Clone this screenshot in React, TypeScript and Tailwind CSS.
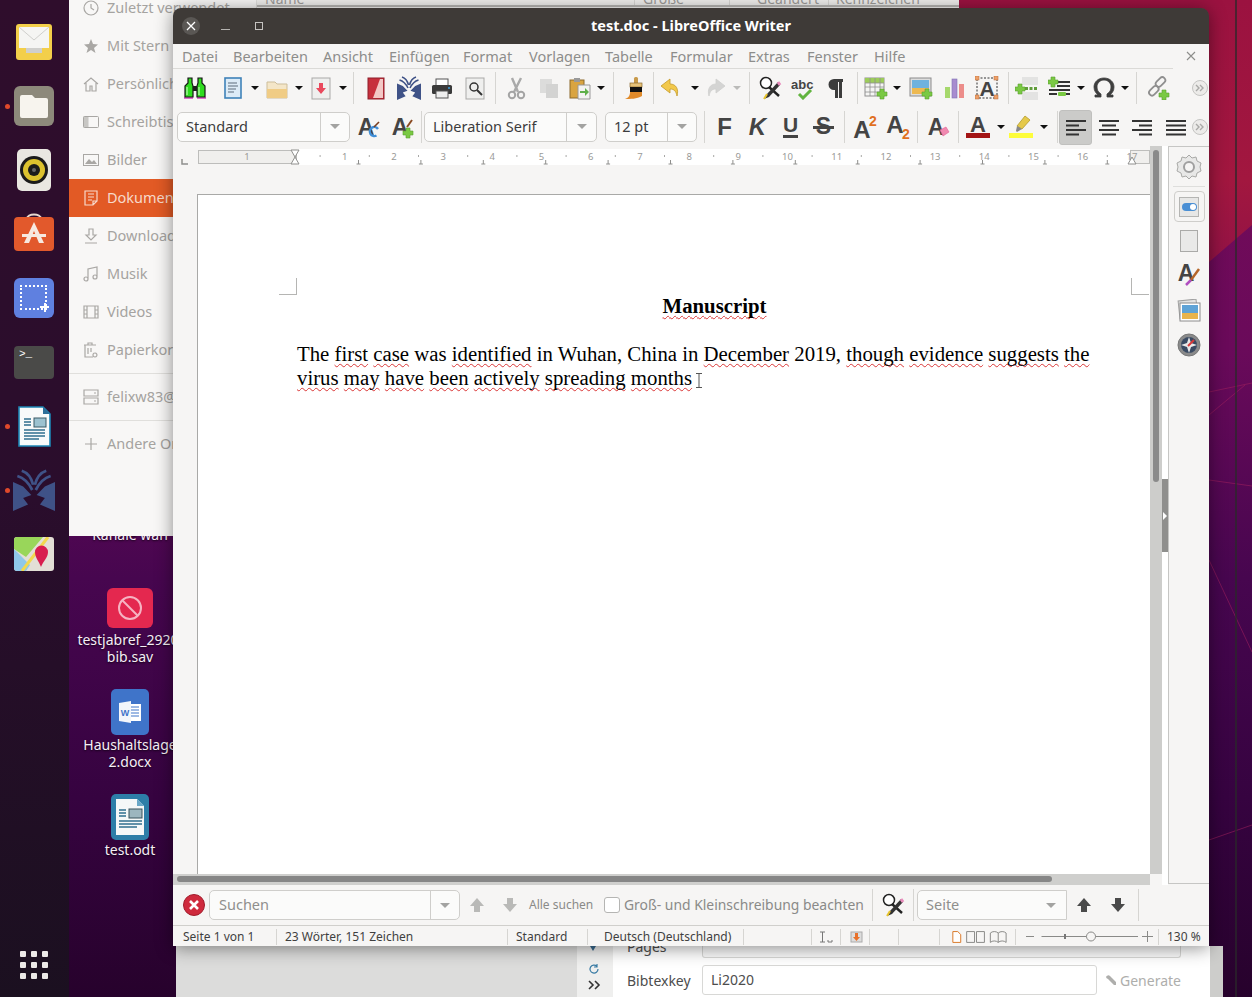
import type { ReactNode } from "react";

const ui = "font-['Noto_Sans',sans-serif]";

const Svg = ({ children, size = 24, vb = "0 0 24 24" }: { children: ReactNode; size?: number; vb?: string }) => (
  <svg width={size} height={size} viewBox={vb} className="block shrink-0">
    {children}
  </svg>
);

const Slot = ({ w, children }: { w: string; children?: ReactNode }) => (
  <div className={`${w} h-full shrink-0 flex items-center justify-center`}>{children}</div>
);

const Caret = ({ w, dim }: { w: string; dim?: boolean }) => (
  <Slot w={w}>
    <span className={`w-0 h-0 border-x-[4px] border-x-transparent border-t-[4px] ${dim ? "border-t-[#bbbbb9]" : "border-t-[#111]"}`} />
  </Slot>
);

const Sep = ({ w }: { w: string }) => (
  <Slot w={w}>
    <span className="w-px h-[32px] bg-[#d6d5d2]" />
  </Slot>
);

const More = () => (
  <svg width="16" height="16" viewBox="0 0 16 16" className="block">
    <circle cx="8" cy="8" r="7.500" fill="#ecebe9" stroke="#c4c4c2" />
    <path d="M4 5l3 3-3 3M8 5l3 3-3 3" fill="none" stroke="#a9a9a7" strokeWidth="1.400" />
  </svg>
);

const Combo = ({ w, inner, text, muted }: { w: string; inner: string; text: string; muted?: boolean }) => (
  <div className={`${w} h-[30px] shrink-0 flex rounded-[5px] border border-[#cfcecb] bg-[#fbfbfa] ${muted ? "text-[#8f8f8d]" : "text-[#3d3d3d]"} text-[14.5px] leading-[26px]`}>
    <span className="flex-1 pl-[8px] whitespace-nowrap overflow-hidden">{text}</span>
    <span className={`${inner} border-l border-[#cfcecb] flex items-center justify-center`}>
      <span className="w-0 h-0 border-x-[5px] border-x-transparent border-t-[5px] border-t-[#a3a3a1]" />
    </span>
  </div>
);

/* ---- toolbar drawings ---- */
const Binoculars = () => (
  <Svg>
    <path d="M1 22h9M14 22h9" stroke="#d63fc0" strokeWidth="1.400" />
    <path d="M5 2h4v5l1 3v11H2V10l3-3zM15 2h4v5l3 3v11h-8V10l1-3z" fill="#2fdc1f" stroke="#151515" strokeWidth="1.200" />
    <path d="M10 10h4v5h-4z" fill="#1d1d1d" />
    <path d="M4 11v8M16 11v8" stroke="#a9f59e" strokeWidth="1.400" />
  </Svg>
);
const NewDoc = () => (
  <Svg>
    <rect x="4" y="2" width="16" height="20" fill="#dcebf7" stroke="#3f82b8" strokeWidth="1.600" />
    <path d="M7 7h9M7 10h10M7 13h8M7 16h6" stroke="#5d6d7c" strokeWidth="1.200" />
  </Svg>
);
const Folder = () => (
  <Svg>
    <path d="M2 6h8l2 2h10v14H2z" fill="#f4e6c8" stroke="#cdbd9a" />
    <path d="M2 13h20v9H2z" fill="#f0cc85" />
  </Svg>
);
const SaveDoc = () => (
  <Svg>
    <rect x="3" y="2" width="18" height="21" fill="#efefee" stroke="#a9a9a7" />
    <path d="M10 7h4v5h3l-5 6-5-6h3z" fill="#e9495d" />
  </Svg>
);
const PdfRed = () => (
  <Svg>
    <rect x="4" y="2" width="16" height="21" fill="#c7303d" stroke="#8e1f2a" />
    <path d="M16 3 L9 22 H19 V3z" fill="#f2c8c6" />
  </Svg>
);
const JabBook = ({ size = 24 }: { size?: number }) => (
  <Svg size={size}>
    <g fill="#3f5287">
      <path d="M0 7.400L5.800 10l4.700 4.800-4.700 1.800 2.800 3.700L0 24z" />
      <path d="M24 7.400L18.200 10l-4.700 4.800 4.700 1.800-2.800 3.700L24 24z" />
    </g>
    <g fill="none" stroke="#3f5287" strokeWidth="1.600">
      <path d="M2.500 4c3.500 1 6.500 4 8.500 8M5 1c3 1 5.500 4 6.500 8" />
      <path d="M21.500 4c-3.500 1-6.500 4-8.500 8M19 1c-3 1-5.500 4-6.500 8" />
    </g>
  </Svg>
);
const Printer = () => (
  <Svg>
    <rect x="6" y="3" width="12" height="7" fill="#fff" stroke="#555" />
    <rect x="2" y="9" width="20" height="9" rx="1.500" fill="#3a3a3a" />
    <rect x="6" y="15" width="12" height="7" fill="#eee" stroke="#555" />
    <circle cx="19" cy="12" r="1" fill="#3aa0e0" />
  </Svg>
);
const Preview = () => (
  <Svg>
    <rect x="3" y="2" width="18" height="21" fill="#efefee" stroke="#a9a9a7" />
    <circle cx="11" cy="11" r="4" fill="none" stroke="#333" strokeWidth="1.500" />
    <path d="M14 14l5 5" stroke="#333" strokeWidth="2" />
  </Svg>
);
const Scissors = () => (
  <Svg>
    <path d="M8 2l6 14M17 2l-7 14" stroke="#aaa" strokeWidth="2.400" />
    <circle cx="8" cy="19" r="3.200" fill="none" stroke="#a4a4a4" strokeWidth="2" />
    <circle cx="17" cy="19" r="3.200" fill="none" stroke="#a4a4a4" strokeWidth="2" />
  </Svg>
);
const CopyDim = () => (
  <Svg>
    <rect x="3" y="3" width="12" height="14" fill="#dcdcdb" />
    <rect x="9" y="8" width="12" height="14" fill="#d3d3d2" />
  </Svg>
);
const Paste = () => (
  <Svg>
    <rect x="2" y="4" width="14" height="18" fill="#d9a441" stroke="#8c6a2c" />
    <rect x="6" y="2" width="6" height="4" fill="#999" />
    <path d="M10 9h12v14H10z" fill="#f3f3f2" stroke="#999" />
    <path d="M12 15h5v-3l4 4-4 4v-3h-5z" fill="#5fb04a" />
  </Svg>
);
const Brush = () => (
  <Svg>
    <rect x="11" y="1" width="4" height="7" rx="1.500" fill="#c89a4a" />
    <rect x="7" y="7" width="12" height="4" fill="#e6c27a" stroke="#8a6a30" strokeWidth=".7" />
    <rect x="7" y="11" width="12" height="5" fill="#111" />
    <path d="M7 16h12v4c-5 3-12 3-17 3 3-1 5-3 5-7z" fill="#e08a2a" />
  </Svg>
);
const Undo = ({ dim }: { dim?: boolean }) => (
  <Svg>
    <path d="M11 3L2 10l9 7v-4c4 0 6 2 7 7 2-7-1-12-7-12z" fill={dim ? "#d4d4d3" : "#f2c84b"} stroke={dim ? "#cfcfce" : "#c49a2a"} strokeWidth=".8" />
  </Svg>
);
const FindPen = () => (
  <Svg>
    <circle cx="8" cy="7" r="5.500" fill="#fff" stroke="#222" strokeWidth="1.500" />
    <path d="M11 11l10 9" stroke="#222" strokeWidth="2.400" />
    <path d="M20 6L9 18l-3 5 5-2L22 9z" fill="#333" />
    <path d="M20 6l2 3" stroke="#e88bbb" strokeWidth="3" />
    <path d="M6 23l3-5" stroke="#e8c52e" strokeWidth="2" />
  </Svg>
);
const Spell = () => (
  <Svg>
    <text x="0" y="13" fontFamily="Liberation Sans" fontWeight="700" fontSize="13" fill="#444">abc</text>
    <path d="M8 18l4 4 8-8" fill="none" stroke="#62b43f" strokeWidth="3" />
  </Svg>
);
const Pilcrow = () => (
  <Svg>
    <path d="M17 3H10a5 5 0 000 11h1v8h3V6h1v16h3V6h1V3z" fill="#3c3c3c" />
  </Svg>
);
const Plus = ({ x, y }: { x: number; y: number }) => (
  <path d={`M${x + 3} ${y}h4v3h3v4h-3v3h-4v-3h-3v-4h3z`} fill="#7ac943" stroke="#5d9e30" strokeWidth=".6" />
);
const TableIcon = () => (
  <Svg>
    <rect x="1" y="2" width="19" height="18" fill="#f5f5f4" stroke="#909090" />
    <rect x="1" y="2" width="19" height="5" fill="#9ccc5a" />
    <path d="M6 2v18M11 2v18M16 2v18M1 7h19M1 11h19M1 16h19" stroke="#909090" strokeWidth=".8" />
    <Plus x={13} y={13} />
  </Svg>
);
const ImageIcon = () => (
  <Svg>
    <rect x="1" y="2" width="21" height="18" fill="#ddd" stroke="#8c8c8c" />
    <rect x="3" y="4" width="17" height="8" fill="#6fb2de" />
    <rect x="3" y="12" width="17" height="6" fill="#edb952" />
    <Plus x={13} y={13} />
  </Svg>
);
const ChartIcon = () => (
  <Svg>
    <rect x="3" y="11" width="5" height="11" fill="#a6d86c" />
    <rect x="10" y="3" width="5" height="19" fill="#a88ccf" stroke="#7f73b5" strokeWidth=".6" />
    <rect x="17" y="8" width="5" height="14" fill="#ec8d8a" />
  </Svg>
);
const TextBox = () => (
  <Svg>
    <rect x="2" y="2" width="20" height="20" fill="none" stroke="#333" strokeDasharray="2 1.500" />
    <text x="12" y="20" textAnchor="middle" fontFamily="Liberation Sans" fontWeight="700" fontSize="21" fill="#444">A</text>
    {[[0, 0], [19, 0], [0, 19], [19, 19]].map(([x, y]) => (
      <rect key={`${x}-${y}`} x={x} y={y} width="4" height="4" fill="#eda06a" stroke="#b76a36" strokeWidth=".5" />
    ))}
  </Svg>
);
const Break = () => (
  <Svg>
    <rect x="7" y="1" width="16" height="8" fill="#e3e3e2" />
    <rect x="7" y="16" width="16" height="8" fill="#e3e3e2" />
    <path d="M10 12.500h13" stroke="#5f9c3a" strokeWidth="3" strokeDasharray="3 1.500" />
    <Plus x={0} y={8} />
  </Svg>
);
const ListAdd = () => (
  <Svg>
    <path d="M9 6h13M9 10h13M1 14h21M1 18h8M16 18h6" stroke="#333" strokeWidth="1.800" />
    <Plus x={0} y={1} />
    <rect x="10" y="16" width="8" height="4" rx="1" fill="#7ac943" />
  </Svg>
);
const Omega = () => (
  <svg width="24" height="24" viewBox="0 0 24 24" className="block">
    <path d="M3 21h6v-3c-3-2-4-4-4-7 0-4 3-7 7-7s7 3 7 7c0 3-1 5-4 7v3h6v-2h-3c2-2 4-4 4-8 0-5-4-9-10-9S2 6 2 11c0 4 2 6 4 8H3z" fill="#3e3e3e" stroke="#3e3e3e" strokeWidth=".8" />
  </svg>
);
const LinkAdd = () => (
  <Svg>
    <rect x="-0.500" y="9" width="11" height="6" rx="3" transform="rotate(-45 5 12) translate(0 4)" fill="none" stroke="#8f8f8f" strokeWidth="1.800" />
    <rect x="9" y="3" width="11" height="6" rx="3" transform="rotate(-45 14.500 6)" fill="none" stroke="#8f8f8f" strokeWidth="1.800" />
    <Plus x={13} y={14} />
  </Svg>
);

const LetterA = ({ children }: { children?: ReactNode }) => (
  <Svg>
    <text x="10" y="20" textAnchor="middle" fontFamily="Liberation Sans" fontWeight="700" fontSize="23" fill="#444">A</text>
    {children}
  </Svg>
);
const Glyph = ({ c, cls }: { c: string; cls: string }) => (
  <span className={`font-['Liberation_Sans',sans-serif] font-bold text-[24px] leading-none text-[#444] ${cls}`}>{c}</span>
);
const Align = ({ d }: { d: string }) => (
  <Svg>
    <path d={d} stroke="#333" strokeWidth="1.800" fill="none" />
  </Svg>
);

const Toolbar1 = () => (
  <div className="h-[38px] flex items-center pl-[5px] pr-[1px]">
    <Slot w="w-[33px]"><Binoculars /></Slot>
    <Slot w="w-[5px]" />
    <Slot w="w-[33px]"><NewDoc /></Slot>
    <Caret w="w-[11px]" />
    <Slot w="w-[33px]"><Folder /></Slot>
    <Caret w="w-[11px]" />
    <Slot w="w-[33px]"><SaveDoc /></Slot>
    <Caret w="w-[11px]" />
    <Sep w="w-[11px]" />
    <Slot w="w-[33px]"><PdfRed /></Slot>
    <Slot w="w-[33px]"><JabBook /></Slot>
    <Slot w="w-[33px]"><Printer /></Slot>
    <Slot w="w-[33px]"><Preview /></Slot>
    <Sep w="w-[8px]" />
    <Slot w="w-[33px]"><Scissors /></Slot>
    <Slot w="w-[33px]"><CopyDim /></Slot>
    <Slot w="w-[29px]"><Paste /></Slot>
    <Caret w="w-[13px]" />
    <Sep w="w-[12px]" />
    <Slot w="w-[31px]"><Brush /></Slot>
    <Sep w="w-[6px]" />
    <Slot w="w-[30px]"><Undo /></Slot>
    <Caret w="w-[17px]" />
    <Slot w="w-[24px]"><span className="-scale-x-100"><Undo dim /></span></Slot>
    <Caret w="w-[20px]" dim />
    <Sep w="w-[4px]" />
    <Slot w="w-[38px]"><FindPen /></Slot>
    <Slot w="w-[28px]"><Spell /></Slot>
    <Slot w="w-[38px]"><Pilcrow /></Slot>
    <Sep w="w-[4px]" />
    <Slot w="w-[34px]"><TableIcon /></Slot>
    <Caret w="w-[8px]" />
    <Slot w="w-[40px]"><ImageIcon /></Slot>
    <Slot w="w-[26px]"><ChartIcon /></Slot>
    <Slot w="w-[40px]"><TextBox /></Slot>
    <Sep w="w-[2px]" />
    <Slot w="w-[36px]"><Break /></Slot>
    <Slot w="w-[30px]"><ListAdd /></Slot>
    <Caret w="w-[12px]" />
    <Slot w="w-[34px]"><Omega /></Slot>
    <Caret w="w-[8px]" />
    <Sep w="w-[14px]" />
    <Slot w="w-[30px]"><LinkAdd /></Slot>
    <div className="ml-auto flex"><More /></div>
  </div>
);

const Toolbar2 = () => (
  <div className="h-[40px] flex items-center pl-[4px] pr-[1px]">
    <Combo w="w-[173px]" inner="w-[29px]" text="Standard" />
    <Slot w="w-[35px]">
      <LetterA>
        <path d="M22 14a4.500 4.500 0 10-1.500 6.500" fill="none" stroke="#3f8ed8" strokeWidth="2.400" />
        <path d="M23 7l-5 5" stroke="#7a3d1d" strokeWidth="1.600" />
      </LetterA>
    </Slot>
    <Slot w="w-[33px]">
      <LetterA>
        <Plus x={13} y={13} />
        <path d="M22 5l-5 7" stroke="#8a4a22" strokeWidth="2" />
      </LetterA>
    </Slot>
    <Sep w="w-[6px]" />
    <Combo w="w-[173px]" inner="w-[30px]" text="Liberation Serif" />
    <Slot w="w-[8px]" />
    <Combo w="w-[92px]" inner="w-[29px]" text="12 pt" />
    <Sep w="w-[15px]" />
    <Slot w="w-[25px]"><Glyph c="F" cls="" /></Slot>
    <Slot w="w-[4px]" />
    <Slot w="w-[33px]"><Glyph c="K" cls="italic" /></Slot>
    <Slot w="w-[33px]">
      <span className="font-['Liberation_Sans',sans-serif] font-bold text-[21px] leading-[20px] text-[#444] border-b-[3px] border-[#444]">U</span>
    </Slot>
    <Slot w="w-[33px]">
      <span className="relative font-['Liberation_Sans',sans-serif] font-bold text-[23px] leading-none text-[#444]">
        S
        <span className="absolute -left-[3px] -right-[3px] top-[11px] h-[3px] bg-[#444]" />
      </span>
    </Slot>
    <Sep w="w-[8px]" />
    <Slot w="w-[33px]">
      <Svg>
        <text x="9" y="23" textAnchor="middle" fontFamily="Liberation Sans" fontWeight="700" fontSize="24" fill="#444">A</text>
        <text x="20" y="11" textAnchor="middle" fontFamily="Liberation Sans" fontWeight="700" fontSize="14" fill="#e0701f">2</text>
      </Svg>
    </Slot>
    <Slot w="w-[33px]">
      <Svg>
        <text x="9" y="18" textAnchor="middle" fontFamily="Liberation Sans" fontWeight="700" fontSize="24" fill="#444">A</text>
        <text x="20" y="24" textAnchor="middle" fontFamily="Liberation Sans" fontWeight="700" fontSize="14" fill="#e0701f">2</text>
      </Svg>
    </Slot>
    <Sep w="w-[7px]" />
    <Slot w="w-[34px]">
      <LetterA>
        <path d="M14 15l6-3 3 5-6 4z" fill="#f08ab0" stroke="#e45e96" strokeWidth=".6" />
      </LetterA>
    </Slot>
    <Sep w="w-[7px]" />
    <Slot w="w-[31px]">
      <Svg>
        <text x="12" y="17" textAnchor="middle" fontFamily="Liberation Sans" fontWeight="700" fontSize="22" fill="#444">A</text>
        <rect x="0" y="18" width="24" height="5" fill="#a31515" />
      </Svg>
    </Slot>
    <Caret w="w-[16px]" />
    <Slot w="w-[24px]">
      <Svg>
        <path d="M16 1l5 4-8 9-5-3z" fill="#e5c94a" stroke="#b29a2a" strokeWidth=".8" />
        <path d="M8 11l5 3-5 3-1-1z" fill="#888" />
        <rect x="0" y="18" width="24" height="5" fill="#fdfd3a" />
      </Svg>
    </Slot>
    <Caret w="w-[22px]" />
    <Sep w="w-[4px]" />
    <div className="w-[33px] h-[35px] mt-[1px] shrink-0 rounded-[3px] bg-[#cbcbc9] border border-[#c0c0be] flex items-center justify-center">
      <Align d="M2 6h20M2 10.500h13M2 15h20M2 19.500h13" />
    </div>
    <Slot w="w-[33px]"><Align d="M2 6h20M5 10.500h14M2 15h20M5 19.500h14" /></Slot>
    <Slot w="w-[34px]"><Align d="M2 6h20M9 10.500h13M2 15h20M9 19.500h13" /></Slot>
    <Slot w="w-[33px]"><Align d="M2 6h20M2 10.500h20M2 15h20M2 19.500h20" /></Slot>
    <div className="ml-auto flex"><More /></div>
  </div>
);

const rulerNums = Array.from({ length: 17 }, (_, i) => i + 1);

const Ruler = () => (
  <div className="h-[19px] pt-[3px] bg-[#f6f5f4]">
    <svg width="977" height="16" viewBox="0 0 977 16" className="block">
      <path d="M9 10v5h6" stroke="#8f8f8d" strokeWidth="1.500" fill="none" />
      <rect x="25.500" y="1.500" width="98" height="13" fill="#f0efed" stroke="#bdbdbb" />
      <rect x="124" y="0" width="833" height="16" fill="#fff" />
      <rect x="957.500" y="1.500" width="19" height="13" fill="#f0efed" stroke="#bdbdbb" />
      <text x="74" y="11" textAnchor="middle" fontFamily="Noto Sans" fontSize="9.500" fill="#9a9a98">1</text>
      <path d="M118 1h8l-4 7 4 7h-8l4-7z" fill="#fff" stroke="#8f8f8d" />
      <path d="M955 15h8l-4-7z" fill="#fff" stroke="#8f8f8d" />
      {rulerNums.map((n) => (
        <g key={n}>
          <text x={123 + n * 49.2 - 0.5} y="11" textAnchor="middle" fontFamily="Noto Sans" fontSize="9.500" fill="#9a9a98">{n}</text>
          <path d={`M${123 + n * 49.2 - 25.1} 6v2`} stroke="#a8a8a6" />
        </g>
      ))}
      {Array.from({ length: 13 }, (_, i) => 185.5 + i * 62.4).map((x) => (
        <path key={x} d={`M${x} 11v4M${x - 2} 15h4`} stroke="#8f8f8d" fill="none" />
      ))}
    </svg>
  </div>
);

const Wavy = ({ children }: { children: ReactNode }) => (
  <span className="underline decoration-wavy decoration-[#d93636] decoration-[1.2px] underline-offset-[2px] [text-decoration-skip-ink:none]">{children}</span>
);

const Page = () => (
  <div className="ml-[24px] mt-[29px] w-[1100px] h-[800px] bg-white border border-[#a9a9a7] relative font-['Liberation_Serif',serif] text-black text-[20.8px] leading-[24px]">
    <span className="absolute left-[81px] top-[83px] w-[18px] h-[17px] border-r border-b border-[#b5b5b3]" />
    <span className="absolute left-[933px] top-[83px] w-[18px] h-[17px] border-l border-b border-[#b5b5b3]" />
    <div className="pl-[99px] pt-[99px] w-[934px]">
      <h1 className="font-bold text-center"><Wavy>Manuscript</Wavy></h1>
      <p className="mt-[24px]">
        The <Wavy>first</Wavy> <Wavy>case</Wavy> was <Wavy>identified</Wavy> in Wuhan, China in <Wavy>December</Wavy> 2019, <Wavy>though</Wavy> <Wavy>evidence</Wavy> <Wavy>suggests</Wavy> <Wavy>the</Wavy>{" "}
        <Wavy>virus</Wavy> <Wavy>may</Wavy> <Wavy>have</Wavy> <Wavy>been</Wavy> <Wavy>actively</Wavy> <Wavy>spreading</Wavy> <Wavy>months</Wavy>
        <svg width="6" height="15" viewBox="0 0 6 15" className="inline-block ml-[4px] align-[-3px]">
          <path d="M0 .5h6M0 14.500h6M3 .5v14" stroke="#555" />
        </svg>
      </p>
    </div>
  </div>
);

const DeckSep = () => <div className="w-[32px] h-px bg-[#dededc]" />;

const Deck = () => (
  <div className="flex-1 border-l border-t border-b border-[#c6c6c4] bg-[#f6f5f4] flex flex-col items-center pt-[7px] mb-[1px]">
    <svg width="26" height="26" viewBox="0 0 26 26" className="block">
      <path d="M13 1l3 3 4-1 1 4 4 2-1 4 1 4-4 2-1 4-4-1-3 3-3-3-4 1-1-4-4-2 1-4-1-4 4-2 1-4 4 1z" fill="#e8e8e7" stroke="#a8a8a6" />
      <circle cx="13" cy="13" r="5" fill="#f6f5f4" stroke="#a0a0a0" strokeWidth="2" />
    </svg>
    <div className="mt-[6px]"><DeckSep /></div>
    <div className="mt-[4px] w-[31px] h-[31px] rounded-[4px] border border-[#cfcecb] flex items-center justify-center">
      <div className="w-[20px] h-[20px] bg-[#e7e7e6] border border-[#b5b5b3] flex items-center justify-center">
        <span className="w-[15px] h-[8px] rounded-full bg-[#4a8fd4] flex justify-end items-center pr-[1px]">
          <span className="w-[6px] h-[6px] rounded-full bg-white" />
        </span>
      </div>
    </div>
    <div className="mt-[8px] w-[18px] h-[22px] bg-[#e9e9e8] border border-[#aaaaa8]" />
    <div className="mt-[11px]">
      <Svg>
        <text x="9" y="18" textAnchor="middle" fontFamily="Liberation Sans" fontWeight="700" fontSize="23" fill="#444">A</text>
        <path d="M22 6l-8 11" stroke="#b5662a" strokeWidth="2.500" />
        <path d="M14 17l-5 5" stroke="#b04ec0" strokeWidth="2.500" />
      </Svg>
    </div>
    <div className="mt-[12px]">
      <Svg>
        <rect x="2" y="1" width="18" height="18" fill="#e3e3e2" stroke="#a0a0a0" transform="rotate(-6 11 10)" />
        <rect x="3" y="4" width="20" height="18" fill="#fff" stroke="#8c8c8c" />
        <rect x="5" y="6" width="16" height="8" fill="#5fa3d6" />
        <rect x="5" y="14" width="16" height="6" fill="#e9b44c" />
      </Svg>
    </div>
    <div className="mt-[10px]">
      <Svg>
        <circle cx="12" cy="12" r="11" fill="#8a8a8a" stroke="#777" />
        <circle cx="12" cy="12" r="8" fill="#3a4a62" />
        <path d="M12 4l2 6 6 2-6 2-2 6-2-6-6-2 6-2z" fill="#e9e9e9" />
        <path d="M17 7l-4 4-2 2z" stroke="#d83a3a" strokeWidth="2" />
      </Svg>
    </div>
  </div>
);

const Arrow = ({ up, dark }: { up?: boolean; dark?: boolean }) => (
  <svg width="18" height="18" viewBox="0 0 18 18" className="block">
    <path d={up ? "M9 2l7 8h-4v6H6v-6H2z" : "M9 16l7-8h-4V2H6v6H2z"} fill={dark ? "#4a4a4a" : "#b9b9b7"} />
  </svg>
);

const FindBar = () => (
  <div className="h-[40px] bg-[#f6f5f4] flex items-center pl-[10px] text-[#8a8a88]">
    <svg width="22" height="22" viewBox="0 0 22 22" className="block shrink-0">
      <circle cx="11" cy="11" r="10.500" fill="#cf2a3d" stroke="#a11d2c" />
      <path d="M7 7l8 8M15 7l-8 8" stroke="#fff" strokeWidth="2.600" />
    </svg>
    <div className="ml-[4px]"><Combo w="w-[251px] [&>span:first-child]:pl-[9px]" inner="w-[29px]" text="Suchen" muted /></div>
    <div className="w-[34px] flex justify-center"><Arrow up /></div>
    <div className="w-[32px] flex justify-center"><Arrow /></div>
    <span className="ml-[3px] w-[75px] text-[12px] whitespace-nowrap">Alle suchen</span>
    <span className="w-[16px] h-[16px] rounded-[3px] border border-[#b5b5b3] bg-white shrink-0" />
    <span className="ml-[4px] w-[248px] text-[13.9px] whitespace-nowrap">Groß- und Kleinschreibung beachten</span>
    <span className="w-px h-[32px] bg-[#d6d5d2]" />
    <div className="w-[40px] flex justify-center"><FindPen /></div>
    <span className="w-px h-[32px] bg-[#d6d5d2]" />
    <div className="ml-[3px]"><Combo w="w-[150px] !rounded-r-none" inner="w-[30px] !border-l-0" text="Seite" muted /></div>
    <div className="w-[34px] flex justify-center"><Arrow up dark /></div>
    <div className="w-[33px] flex justify-center"><Arrow dark /></div>
    <span className="ml-[4px] w-px h-[32px] bg-[#d6d5d2]" />
  </div>
);

const StatusCell = ({ w, children }: { w: string; children?: ReactNode }) => (
  <div className={`${w} shrink-0 h-[16px] flex items-center border-r border-[#d6d5d2] whitespace-nowrap overflow-hidden`}>{children}</div>
);

const StatusBar = () => (
  <div className="h-[21px] border-t border-[#d0cfcc] bg-[#f6f5f4] flex items-center text-[12px] text-[#3f3f3f] pl-[10px] pt-[1px]">
    <StatusCell w="w-[94px]">Seite 1 von 1</StatusCell>
    <StatusCell w="w-[231px]"><span className="pl-[8px]">23 Wörter, 151 Zeichen</span></StatusCell>
    <StatusCell w="w-[80px]"><span className="pl-[8px]">Standard</span></StatusCell>
    <StatusCell w="w-[156px]"><span className="pl-[16px]">Deutsch (Deutschland)</span></StatusCell>
    <StatusCell w="w-[68px]" />
    <StatusCell w="w-[29px]">
      <svg width="28" height="12" viewBox="0 0 28 12" className="block">
        <path d="M8 1h5M8 11h5M10.500 1v10M16 9v2h4v-2" stroke="#777" fill="none" />
      </svg>
    </StatusCell>
    <StatusCell w="w-[29px]">
      <svg width="28" height="12" viewBox="0 0 28 12" className="block">
        <rect x="10" y="1" width="11" height="10" fill="#ddd" stroke="#aaa" />
        <path d="M14 2h3v4h2l-3.500 4L12 6h2z" fill="#e8702a" />
      </svg>
    </StatusCell>
    <StatusCell w="w-[29px]" />
    <StatusCell w="w-[41px]" />
    <StatusCell w="w-[76px]">
      <svg width="76" height="13" viewBox="0 0 76 13" className="block">
        <path d="M13 1.500h5l3 3v8h-8z" fill="#fff" stroke="#d97a2a" />
        <path d="M27 1.500h8v11h-8zM37 1.500h8v11h-8zM51 3c2-2 6-2 8 0 2-2 6-2 8 0v9.500c-2-2-6-2-8 0-2-2-6-2-8 0zM59 3v9.500" fill="none" stroke="#8a8a88" />
      </svg>
    </StatusCell>
    <StatusCell w="w-[143px]">
      <svg width="142" height="13" viewBox="0 0 142 13" className="block">
        <path d="M10 6.500h8M25.500 6.500h96.500M126 6.500h11M131.500 1v11" stroke="#8a8a88" fill="none" />
        <path d="M49 4v5" stroke="#777" strokeWidth="2" />
        <circle cx="75" cy="6.500" r="4.500" fill="#f6f5f4" stroke="#8a8a88" />
      </svg>
    </StatusCell>
    <span className="pl-[8px]">130 %</span>
  </div>
);

const Writer = () => (
  <div className={`absolute left-[173px] top-[8px] w-[1036px] h-[938px] flex flex-col rounded-t-[8px] overflow-hidden shadow-[0_2px_18px_rgba(0,0,0,0.45)] ${ui}`}>
    <div className="h-[36px] shrink-0 bg-[#3e3a37] relative flex items-center justify-center text-white font-bold text-[14.5px]">
      test.doc - LibreOffice Writer
      <div className="absolute left-0 top-0 h-full flex items-center pl-[9px]">
        <span className="w-[18px] h-[18px] rounded-full bg-[#5a5754] flex items-center justify-center">
          <svg width="10" height="10" viewBox="0 0 10 10"><path d="M1 1l8 8M9 1l-8 8" stroke="#fff" strokeWidth="1.300" /></svg>
        </span>
        <span className="ml-[21px] w-[9px] h-px mt-[7px] bg-[#b5b3b0]" />
        <span className="ml-[25px] w-[8px] h-[8px] border border-[#c5c3c0]" />
      </div>
    </div>
    <div className="flex-1 flex flex-col bg-[#f6f5f4] min-h-0">
      <div className="relative h-[24px] shrink-0 mr-[36px] border-b border-[#dbdad7] box-content flex items-center pl-[9px] -mb-[0px] text-[14.5px] text-[#8d8d8b]">
        <span className="w-[51px] pt-[1px]">Datei</span>
        <span className="w-[90px] pt-[1px]">Bearbeiten</span>
        <span className="w-[66px] pt-[1px]">Ansicht</span>
        <span className="w-[74px] pt-[1px]">Einfügen</span>
        <span className="w-[66px] pt-[1px]">Format</span>
        <span className="w-[76px] pt-[1px]">Vorlagen</span>
        <span className="w-[65px] pt-[1px]">Tabelle</span>
        <span className="w-[78px] pt-[1px]">Formular</span>
        <span className="w-[59px] pt-[1px]">Extras</span>
        <span className="w-[67px] pt-[1px]">Fenster</span>
        <span className="pt-[1px]">Hilfe</span>
        <svg width="10" height="10" viewBox="0 0 10 10" className="absolute -right-[23px] top-[7px]"><path d="M1 1l8 8M9 1l-8 8" stroke="#8d8d8b" strokeWidth="1.100" /></svg>
      </div>
      <Toolbar1 />
      <Toolbar2 />
      <div className="h-[739px] flex shrink-0">
        <div className="w-[977px] flex flex-col shrink-0">
          <Ruler />
          <div className="flex-1 min-h-0 overflow-hidden">
            <Page />
          </div>
          <div className="h-[11px] shrink-0 bg-[#cfcfcd] pl-[4px] pt-[2px]">
            <div className="w-[875px] h-[6px] rounded-full bg-[#868686]" />
          </div>
        </div>
        <div className="w-[12px] h-[728px] shrink-0 bg-[#cdcdcb] pt-[4px] pl-[3px]">
          <div className="w-[6px] h-[332px] rounded-full bg-[#8a8a8a]" />
        </div>
        <div className="w-[6px] shrink-0 bg-white pt-[333px]">
          <div className="h-[73px] bg-[#8f8f8d] flex items-center justify-center">
            <span className="w-0 h-0 border-y-[4px] border-y-transparent border-l-[4px] border-l-white" />
          </div>
        </div>
        <Deck />
      </div>
      <FindBar />
      <StatusBar />
    </div>
  </div>
);

/* ---- desktop and what is behind ---- */
const dim = "#a9a7a4";
const Side = ({ label, children, active }: { label: string; children: ReactNode; active?: boolean }) => (
  <div className={`h-[38px] flex items-center pl-[14px] whitespace-nowrap ${active ? "bg-[#e25a25] text-[#f7d9cb]" : "text-[#a5a3a0]"}`}>
    <span className="w-[24px] shrink-0">{children}</span>
    {label}
  </div>
);
const Ic = ({ d, c = dim }: { d: string; c?: string }) => (
  <svg width="16" height="16" viewBox="0 0 16 16" className="block">
    <path d={d} fill="none" stroke={c} strokeWidth="1.200" />
  </svg>
);

const FileManager = () => (
  <div className={`absolute left-[69px] top-[-11px] w-[890px] h-[547px] bg-[#f8f7f6] flex ${ui} text-[14.5px]`}>
    <div className="w-[188px] shrink-0 border-r border-[#e0dfdc]">
      <Side label="Zuletzt verwendet"><Ic d="M8 1a7 7 0 110 14A7 7 0 018 1zM8 4v4l3 2" /></Side>
      <Side label="Mit Stern">
        <svg width="16" height="16" viewBox="0 0 16 16" className="block"><path d="M8 1l2 5 5 .5-4 3.500 1.500 5L8 12l-4.500 3L5 10 1 6.500 6 6z" fill={dim} /></svg>
      </Side>
      <Side label="Persönlicher Ordner"><Ic d="M1 8l7-6 7 6M3 7v8h4v-5h2v5h4V7" /></Side>
      <Side label="Schreibtisch">
        <svg width="16" height="16" viewBox="0 0 16 16" className="block"><rect x=".5" y="2.500" width="15" height="11" rx="1" fill="none" stroke={dim} /><rect x=".5" y="2.500" width="5" height="11" fill={dim} opacity=".6" /></svg>
      </Side>
      <Side label="Bilder">
        <svg width="16" height="16" viewBox="0 0 16 16" className="block"><rect x=".5" y="2.500" width="15" height="11" fill="none" stroke={dim} /><path d="M2 12l4-5 3 3 2-2 3 4z" fill={dim} /></svg>
      </Side>
      <Side label="Dokumente" active>
        <Ic c="#f7d9cb" d="M2 1h12v10l-4 4H2zM5 4h6M5 7h6M5 10h4M10 15v-4h4" />
      </Side>
      <Side label="Downloads"><Ic d="M6 1h4v6h3l-5 5-5-5h3zM2 15h12" /></Side>
      <Side label="Musik"><Ic d="M5 13V3l9-2v10M5 13a2 2 0 11-4 0 2 2 0 014 0zM14 11a2 2 0 11-4 0 2 2 0 014 0z" /></Side>
      <Side label="Videos"><Ic d="M1 2h14v12H1zM4 2v12M12 2v12M1 6h3M1 10h3M12 6h3M12 10h3" /></Side>
      <Side label="Papierkorb"><Ic d="M1 3h12M5 3V1h4v2M2 3v12h8M5 6v6M8 6v4M12 11a2 2 0 11-.1 0" /></Side>
      <div className="h-[9px] flex flex-col justify-center"><div className="h-px bg-[#e0dfdc]" /></div>
      <Side label="felixw83@"><Ic d="M1 1h14v6H1zM1 9h14v6H1zM11 4h2M11 12h2" /></Side>
      <div className="h-[9px] flex flex-col justify-center"><div className="h-px bg-[#e0dfdc]" /></div>
      <Side label="Andere Orte"><Ic d="M8 2v12M2 8h12" /></Side>
    </div>
    <div className="flex-1">
      <div className="h-[18px] bg-[#efeeec] border-b-2 border-[#b9b8b5] flex text-[14px] leading-[20px] text-[#9c9a98] overflow-hidden">
        <span className="w-[378px] pl-[8px] border-r border-[#d6d5d2]">Name</span>
        <span className="w-[95px] pl-[8px] border-r border-[#d6d5d2]">Größe</span>
        <span className="w-[99px] pl-[27px] border-r border-[#d6d5d2]">Geändert</span>
        <span className="pl-[7px]">Kennzeichen</span>
      </div>
    </div>
  </div>
);

const Tile = ({ children }: { children: ReactNode }) => <div className="h-[64px] flex items-center justify-center relative">{children}</div>;

const Dot = () => <span className="absolute z-10 left-[5px] top-[30px] w-[5px] h-[5px] rounded-full bg-[#e0492b]" />;

const Dock = () => (
  <div className="absolute left-0 top-0 w-[69px] h-full bg-[linear-gradient(180deg,#2f0d2c,#2a0d2c_50%,#1b1020)] flex flex-col items-stretch pt-[10px] pb-[18px] pr-[1px]">
    <Tile>
      <svg width="36" height="36" viewBox="0 0 36 36" className="block">
        <rect x="0" y="0" width="36" height="36" rx="3" fill="#f3cf4a" />
        <rect x="3" y="3" width="30" height="21" fill="#f5f5f3" />
        <path d="M3 3l15 13L33 3" fill="none" stroke="#cfcfcc" />
        <rect x="10" y="24" width="16" height="5" fill="#cfcfcc" />
      </svg>
    </Tile>
    <Tile>
      <Dot />
      <div className="w-[40px] h-[40px] rounded-[6px] bg-[#8d897b] flex items-center justify-center">
        <svg width="30" height="26" viewBox="0 0 30 26"><path d="M1 4a2 2 0 012-2h10l3 3h11a2 2 0 012 2v16a2 2 0 01-2 2H3a2 2 0 01-2-2z" fill="#f7f4ee" /></svg>
      </div>
    </Tile>
    <Tile>
      <div className="w-[34px] h-[42px] rounded-[5px] bg-[#e9e7e1] flex items-center justify-center">
        <svg width="30" height="30" viewBox="0 0 30 30"><circle cx="15" cy="15" r="14" fill="#1b1b1b" /><circle cx="15" cy="15" r="11" fill="#dcc22e" /><circle cx="15" cy="15" r="6" fill="#1b1b1b" /><circle cx="15" cy="15" r="2" fill="#666" /></svg>
      </div>
    </Tile>
    <Tile>
      <svg width="40" height="40" viewBox="0 0 40 40" className="block -mt-[6px]">
        <path d="M13 8c0-6 14-6 14 0" fill="none" stroke="#e6d9cf" strokeWidth="2" />
        <rect x="0" y="6" width="40" height="34" rx="4" fill="#e2592c" />
        <path d="M20 11l10 21h-5l-5-12-5 12h-5z" fill="#f7e9e0" />
        <rect x="8" y="23" width="24" height="3" fill="#f7e9e0" />
      </svg>
    </Tile>
    <Tile>
      <div className="w-[40px] h-[40px] rounded-[6px] bg-[#5f80e0] relative">
        <span className="absolute left-[6px] top-[7px] w-[27px] h-[25px] border-2 border-dotted border-white" />
        <span className="absolute left-[26px] top-[28px] w-[9px] h-[2px] bg-white" />
        <span className="absolute left-[29.5px] top-[24.5px] w-[2px] h-[9px] bg-white" />
      </div>
    </Tile>
    <Tile>
      <div className="w-[40px] h-[33px] rounded-[4px] bg-[#4a4a48] pl-[5px] pt-[2px] text-white text-[11px] leading-[13px] font-['Liberation_Mono',monospace]">&gt;_</div>
    </Tile>
    <Tile>
      <Dot />
      <svg width="33" height="41" viewBox="0 0 33 41" className="block">
        <path d="M1 1h24l7 7v32H1z" fill="#f8fafa" stroke="#1d86b5" strokeWidth="1.600" />
        <path d="M25 1v7h7z" fill="#2d6f99" />
        <path d="M6 13h7M6 16h7M6 19h7M6 24h21M6 27h21M6 30h21M6 33h15" stroke="#2f6f8f" strokeWidth="1.500" />
        <rect x="16" y="12" width="12" height="9" fill="#9cc2d0" stroke="#3a5a66" />
      </svg>
    </Tile>
    <Tile>
      <Dot />
      <JabBook size={42} />
    </Tile>
    <Tile>
      <svg width="40" height="34" viewBox="0 0 40 34" className="block">
        <rect width="40" height="34" rx="3" fill="#e3dfd6" />
        <path d="M0 3a3 3 0 013-3h26L12 20 0 12z" fill="#99d65a" />
        <path d="M0 12l16 16-4 6H3a3 3 0 01-3-3z" fill="#8fc8ea" />
        <path d="M34 0L8 34" stroke="#f2d94e" strokeWidth="3" />
        <path d="M27 30c-2-6-6-9-6-15a6.500 6.500 0 0113 0c0 6-5 9-7 15z" fill="#d81e4e" />
      </svg>
    </Tile>
    <div className="mt-auto grid grid-cols-3 gap-x-[5px] gap-y-[5px] w-[28px] self-center">
      {Array.from({ length: 9 }, (_, i) => (
        <span key={i} className="w-[6px] h-[6px] bg-[#ece9e8] rounded-[1px]" />
      ))}
    </div>
  </div>
);

const Label = ({ children }: { children: ReactNode }) => (
  <div className="text-center text-[14px] leading-[17px] text-[#f5eef5] whitespace-nowrap [text-shadow:0_1px_2px_rgba(0,0,0,0.7)]">{children}</div>
);

const Desktop = () => (
  <div className={`absolute left-[77px] top-[526px] w-[106px] flex flex-col items-center ${ui}`}>
    <Label>Kanäle wäh</Label>
    <div className="mt-[45px] w-[46px] h-[40px] rounded-[6px] bg-[#e4284f] flex items-center justify-center">
      <svg width="26" height="26" viewBox="0 0 26 26"><circle cx="13" cy="13" r="11" fill="none" stroke="#f6b3c2" strokeWidth="2" /><path d="M5 5l16 16" stroke="#f6b3c2" strokeWidth="2" /></svg>
    </div>
    <div className="mt-[3px]"><Label><span className="inline-block -ml-[4px]">testjabref_2920</span><br />bib.sav</Label></div>
    <div className="mt-[24px] w-[38px] h-[46px] rounded-[5px] bg-[#3f74c9] flex items-center justify-center">
      <svg width="26" height="26" viewBox="0 0 26 26">
        <rect x="11" y="5" width="13" height="17" fill="#fff" />
        <path d="M14 8h8M14 11h8M14 14h8M14 17h8" stroke="#3f74c9" />
        <path d="M2 4l12-2v22L2 22z" fill="#f3f6fb" />
        <text x="8" y="17" textAnchor="middle" fontFamily="Liberation Sans" fontWeight="700" fontSize="9" fill="#3f74c9">W</text>
      </svg>
    </div>
    <div className="mt-[1px]"><Label>Haushaltslage<br />2.docx</Label></div>
    <div className="mt-[24px] w-[38px] h-[46px] rounded-[5px] bg-[#2d7ea8] flex items-center justify-center">
      <svg width="30" height="38" viewBox="0 0 30 38">
        <path d="M1 1h21l7 7v29H1z" fill="#f5f8f8" />
        <path d="M22 1v7h7z" fill="#6aa8c7" />
        <path d="M4 12h7M4 15h7M4 18h7M4 23h23M4 26h23M4 29h18" stroke="#2f6f8f" strokeWidth="1.500" />
        <rect x="14" y="11" width="13" height="9" fill="#9cb6bf" stroke="#39525c" />
      </svg>
    </div>
    <div className="mt-[1px]"><Label>test.odt</Label></div>
  </div>
);

const BackWindow = () => (
  <div className={`absolute left-[176px] top-[946px] w-[1028px] h-[51px] flex bg-[#dcdcdb] ${ui}`}>
    <div className="w-[401px] shrink-0" />
    <div className="w-[36px] shrink-0 bg-[#efefee] flex flex-col pl-[11px]">
      <svg width="10" height="5" viewBox="0 0 10 5" className="block"><path d="M2 0h6L5 5z" fill="#3a6a90" /></svg>
      <svg width="12" height="12" viewBox="0 0 12 12" className="block mt-[12px]"><path d="M10 6a4 4 0 11-1.200-2.800M9 1v3H6" fill="none" stroke="#3a7ca5" strokeWidth="1.200" /></svg>
      <svg width="14" height="10" viewBox="0 0 14 10" className="block mt-[5px]"><path d="M1 1l4 4-4 4M7 1l4 4-4 4" fill="none" stroke="#333" strokeWidth="1.600" /></svg>
    </div>
    <div className="flex-1 bg-white flex flex-col text-[14px] text-[#4d4d4d] pl-[14px] pr-[29px]">
      <div className="h-[12px] flex">
        <span className="w-[75px] -mt-[7px] leading-[16px]">Pages</span>
        <span className="flex-1 h-[12px] border border-t-0 border-[#d8d8d6] rounded-b-[3px] bg-[#fafafa]" />
      </div>
      <div className="mt-[7px] flex items-center">
        <span className="w-[75px]">Bibtexkey</span>
        <span className="w-[395px] h-[30px] border border-[#d8d8d6] rounded-[3px] pl-[8px] leading-[28px]">Li2020</span>
        <span className="pl-[8px] text-[#aeaeac] whitespace-nowrap flex items-center gap-[3px]">
          <svg width="12" height="12" viewBox="0 0 12 12"><path d="M1 3a2.500 2.500 0 014-1l6 6v3H9L3 5a2.500 2.500 0 01-2-2z" fill="#aeaeac" /></svg>
          Generate
        </span>
      </div>
    </div>
    <div className="w-[13px] shrink-0 bg-[#cdcdcb]" />
  </div>
);

const Wallpaper = () => (
  <svg width="1252" height="997" viewBox="0 0 1252 997" className="absolute left-0 top-0 block">
    <defs>
      <linearGradient id="wp" x1="0" y1="0" x2="0" y2="1">
        <stop offset="0" stopColor="#7a0c58" />
        <stop offset=".35" stopColor="#6a0a5a" />
        <stop offset=".58" stopColor="#47064f" />
        <stop offset=".8" stopColor="#360340" />
        <stop offset="1" stopColor="#27022c" />
      </linearGradient>
      <linearGradient id="wc" x1="0" y1="0" x2="0" y2="1">
        <stop offset="0" stopColor="#9b1240" />
        <stop offset=".6" stopColor="#a2173f" />
        <stop offset="1" stopColor="#8c1148" />
      </linearGradient>
    </defs>
    <rect width="1252" height="997" fill="url(#wp)" />
    <path d="M900 0H1252V225L1209 262L900 300z" fill="url(#wc)" />
    <g fill="none" stroke="#a3215f" strokeOpacity=".55">
      <path d="M1209 392L1252 383M1209 480L1252 486M1209 415L1245 385M1209 560L1252 652M1209 840L1252 825" />
    </g>
  </svg>
);

export default function App() {
  return (
    <div className="relative w-[1252px] h-[997px] overflow-hidden">
      <Wallpaper />
      <Desktop />
      <FileManager />
      <BackWindow />
      <Dock />
      <Writer />
      <div className="absolute left-[1235px] top-0 w-[2px] h-full bg-[#2a2a2a]/70" />
    </div>
  );
}
